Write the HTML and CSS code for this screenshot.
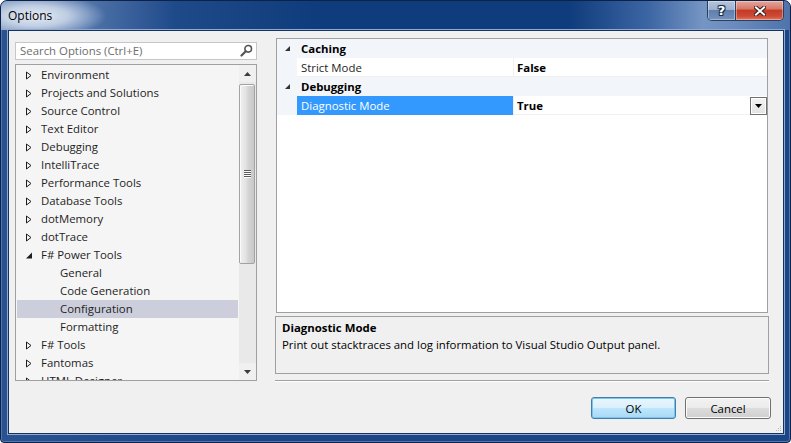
FILE: index.html
```html
<!DOCTYPE html>
<html>
<head>
<meta charset="utf-8">
<title>Options</title>
<link rel="stylesheet" href="styles.css">
</head>
<body>
<div class="window">
  <div class="titlebar">
    <span class="title">Options</span>
    <div class="caption">
      <div class="cap-btn help">?</div>
      <div class="cap-btn close">
        <svg width="12" height="10" viewBox="0 0 12 10"><path d="M2 1.5 L10 8.5 M10 1.5 L2 8.5" stroke="#3a2320" stroke-width="4" stroke-linecap="square"/><path d="M2 1.5 L10 8.5 M10 1.5 L2 8.5" stroke="#fff" stroke-width="2" stroke-linecap="square"/></svg>
      </div>
    </div>
  </div>
  <div class="client">
    <div class="main">
      <div class="left">
        <div class="search">
          <span class="placeholder">Search Options (Ctrl+E)</span>
          <svg class="mag" width="13" height="13" viewBox="0 0 13 13"><circle cx="8.2" cy="4.8" r="3.3" fill="none" stroke="#555" stroke-width="1.6"/><path d="M5.8 7.2 L1.5 11.5" stroke="#555" stroke-width="2.2" stroke-linecap="round"/></svg>
        </div>
        <div class="tree">
          <div class="tree-list">
            <div class="row"><span class="exp"><svg width="6" height="9" viewBox="0 0 6 9"><path d="M0.5 1 L5 4.5 L0.5 8 Z" fill="none" stroke="#1e1e1e"/></svg></span>Environment</div>
            <div class="row"><span class="exp"><svg width="6" height="9" viewBox="0 0 6 9"><path d="M0.5 1 L5 4.5 L0.5 8 Z" fill="none" stroke="#1e1e1e"/></svg></span>Projects and Solutions</div>
            <div class="row"><span class="exp"><svg width="6" height="9" viewBox="0 0 6 9"><path d="M0.5 1 L5 4.5 L0.5 8 Z" fill="none" stroke="#1e1e1e"/></svg></span>Source Control</div>
            <div class="row"><span class="exp"><svg width="6" height="9" viewBox="0 0 6 9"><path d="M0.5 1 L5 4.5 L0.5 8 Z" fill="none" stroke="#1e1e1e"/></svg></span>Text Editor</div>
            <div class="row"><span class="exp"><svg width="6" height="9" viewBox="0 0 6 9"><path d="M0.5 1 L5 4.5 L0.5 8 Z" fill="none" stroke="#1e1e1e"/></svg></span>Debugging</div>
            <div class="row"><span class="exp"><svg width="6" height="9" viewBox="0 0 6 9"><path d="M0.5 1 L5 4.5 L0.5 8 Z" fill="none" stroke="#1e1e1e"/></svg></span>IntelliTrace</div>
            <div class="row"><span class="exp"><svg width="6" height="9" viewBox="0 0 6 9"><path d="M0.5 1 L5 4.5 L0.5 8 Z" fill="none" stroke="#1e1e1e"/></svg></span>Performance Tools</div>
            <div class="row"><span class="exp"><svg width="6" height="9" viewBox="0 0 6 9"><path d="M0.5 1 L5 4.5 L0.5 8 Z" fill="none" stroke="#1e1e1e"/></svg></span>Database Tools</div>
            <div class="row"><span class="exp"><svg width="6" height="9" viewBox="0 0 6 9"><path d="M0.5 1 L5 4.5 L0.5 8 Z" fill="none" stroke="#1e1e1e"/></svg></span>dotMemory</div>
            <div class="row"><span class="exp"><svg width="6" height="9" viewBox="0 0 6 9"><path d="M0.5 1 L5 4.5 L0.5 8 Z" fill="none" stroke="#1e1e1e"/></svg></span>dotTrace</div>
            <div class="row"><span class="exp"><svg width="6" height="9" viewBox="0 0 6 9"><path d="M6 1.5 L6 7.5 L0 7.5 Z" fill="#1e1e1e"/></svg></span>F# Power Tools</div>
            <div class="row child">General</div>
            <div class="row child">Code Generation</div>
            <div class="row child selected">Configuration</div>
            <div class="row child">Formatting</div>
            <div class="row"><span class="exp"><svg width="6" height="9" viewBox="0 0 6 9"><path d="M0.5 1 L5 4.5 L0.5 8 Z" fill="none" stroke="#1e1e1e"/></svg></span>F# Tools</div>
            <div class="row"><span class="exp"><svg width="6" height="9" viewBox="0 0 6 9"><path d="M0.5 1 L5 4.5 L0.5 8 Z" fill="none" stroke="#1e1e1e"/></svg></span>Fantomas</div>
            <div class="row"><span class="exp"><svg width="6" height="9" viewBox="0 0 6 9"><path d="M0.5 1 L5 4.5 L0.5 8 Z" fill="none" stroke="#1e1e1e"/></svg></span>HTML Designer</div>
          </div>
          <div class="vscroll">
            <div class="sb-btn"><svg width="7" height="4" viewBox="0 0 7 4"><path d="M0 4 L3.5 0 L7 4 Z" fill="#3c3c3c"/></svg></div>
            <div class="sb-track">
              <div class="sb-thumb">
                <div class="sb-grip"><i></i><i></i><i></i><i></i></div>
              </div>
            </div>
            <div class="sb-btn"><svg width="7" height="4" viewBox="0 0 7 4"><path d="M0 0 L7 0 L3.5 4 Z" fill="#3c3c3c"/></svg></div>
          </div>
        </div>
      </div>
      <div class="right">
        <div class="pgrid">
          <div class="prow cat">
            <span class="pmargin"><svg width="5" height="5" viewBox="0 0 5 5"><path d="M5 0 L5 5 L0 5 Z" fill="#333"/></svg></span>
            <span class="cat-name">Caching</span>
          </div>
          <div class="prow">
            <span class="pmargin"></span>
            <span class="pname">Strict Mode</span>
            <span class="pval">False</span>
          </div>
          <div class="prow cat">
            <span class="pmargin"><svg width="5" height="5" viewBox="0 0 5 5"><path d="M5 0 L5 5 L0 5 Z" fill="#333"/></svg></span>
            <span class="cat-name">Debugging</span>
          </div>
          <div class="prow">
            <span class="pmargin"></span>
            <span class="pname selected">Diagnostic Mode</span>
            <span class="pval">True<span class="dropbtn"><svg width="7" height="4" viewBox="0 0 7 4"><path d="M0 0 L7 0 L3.5 4 Z" fill="#000"/></svg></span></span>
          </div>
        </div>
        <div class="desc">
          <div class="desc-title">Diagnostic Mode</div>
          <div class="desc-text">Print out stacktraces and log information to Visual Studio Output panel.</div>
        </div>
        <div class="sep"></div>
      </div>
    </div>
    <div class="footer">
      <button class="btn default">OK</button>
      <button class="btn">Cancel</button>
    </div>
    <svg class="grip" width="7" height="7" viewBox="0 0 7 7"><g fill="#b8b8b8"><rect x="5" y="1" width="1" height="1"/><rect x="3" y="3" width="1" height="1"/><rect x="5" y="3" width="1" height="1"/><rect x="1" y="5" width="1" height="1"/><rect x="3" y="5" width="1" height="1"/><rect x="5" y="5" width="1" height="1"/></g></svg>
  </div>
</div>
</body>
</html>
```
FILE: styles.css
```css
* { box-sizing: border-box; }
html, body { margin: 0; padding: 0; }
body {
  width: 791px;
  height: 443px;
  overflow: hidden;
  background: #ffffff;
  font-family: "Open Sans", "Noto Sans", sans-serif;
  font-size: 11.4px;
  color: #1e1e1e;
}
.window {
  width: 791px;
  height: 443px;
  display: flex;
  flex-direction: column;
  padding: 0 6px 8px 7px;
  border: 1px solid #0e2147;
  border-radius: 7px 7px 4px 4px;
  background:
    linear-gradient(90deg, #2a5190 0, #1d4586 30%, #1c4586 100%);
  box-shadow: inset 0 0 0 1px #4d78b5;
}
.titlebar {
  height: 29px;
  margin: 0 -6px 0 -7px;
  padding-left: 7px;
  display: flex;
  align-items: flex-start;
  border-radius: 6px 6px 0 0;
  background:
    radial-gradient(ellipse 70px 22px at 35px 15px, rgba(235,240,248,0.95) 0, rgba(225,233,244,0.75) 45%, rgba(200,215,235,0) 100%),
    linear-gradient(90deg, #6f8dba 0, #5578ad 10%, #1f4a8a 22%, #0f3c7c 40%, #0f3c7c 72%, #3c65a3 82%, #7595c4 89%, #6a8bbd 93%, #4e74ab 100%);
}
.title {
  margin-top: 6px;
  font-size: 12px;
  color: #000;
}
.caption {
  margin-left: auto;
  margin-right: 6px;
  display: flex;
  height: 20px;
  border: 1px solid #2b3e5e;
  border-top: none;
  border-radius: 0 0 5px 5px;
  overflow: hidden;
}
.cap-btn {
  height: 19px;
  display: flex;
  align-items: center;
  justify-content: center;
  box-shadow: inset 0 0 0 1px rgba(255,255,255,0.35);
}
.help {
  width: 28px;
  border-right: 1px solid #2b3e5e;
  background: linear-gradient(#b6c5dc 0, #9cb1cf 45%, #5f7fae 50%, #7691bb 100%);
  color: #fff;
  font-family: "DejaVu Sans", sans-serif;
  font-weight: bold;
  font-size: 13px;
  text-shadow: 0 0 2px #1d2d48, 1px 1px 0 #1d2d48, -1px -1px 0 #1d2d48, 1px -1px 0 #1d2d48, -1px 1px 0 #1d2d48;
}
.close {
  width: 47px;
  background: linear-gradient(#e6a79c 0, #d7796b 40%, #c43b27 50%, #cc4a33 80%, #e07a62 100%);
}
.client {
  position: relative;
  flex: 1;
  background: #f0f0f0;
  border: 1px solid #16335f;
  box-shadow: 0 0 0 1px #8fa9d0;
  padding: 7px 0 0 6px;
  display: flex;
  flex-direction: column;
}
.main {
  display: flex;
  gap: 19px;
}
.left {
  width: 242px;
  display: flex;
  flex-direction: column;
}
.search {
  margin-top: 4px;
  height: 18px;
  background: #fff;
  border: 1px solid #c3c7cd;
  display: flex;
  align-items: center;
  padding-left: 4px;
  padding-right: 3px;
  padding-bottom: 1px;
}
.placeholder {
  color: #6d6d6d;
  flex: 1;
}
.mag { display: block; }
.tree {
  margin-top: 4px;
  height: 317px;
  border: 1px solid #a0a0a0;
  background: #f5f5f5;
  display: flex;
  overflow: hidden;
}
.tree-list {
  flex: 1;
  padding-top: 1px;
  overflow: hidden;
}
.row {
  height: 18px;
  display: flex;
  align-items: center;
  padding-left: 9px;
  padding-bottom: 1px;
  margin-left: 1px;
  margin-right: 1px;
  white-space: nowrap;
}
.exp {
  width: 15px;
  display: flex;
  align-items: center;
  padding-top: 1px;
}
.exp svg { display: block; }
.row.child { padding-left: 43px; }
.row.selected { background: #cccedb; }
.vscroll {
  width: 17px;
  display: flex;
  flex-direction: column;
  background: #e9e9e9;
}
.sb-btn {
  height: 17px;
  display: flex;
  align-items: center;
  justify-content: center;
  background: #f0f0f0;
}
.sb-track {
  flex: 1;
  padding-top: 2px;
  padding-right: 1px;
}
.sb-thumb {
  height: 180px;
  border: 1px solid #a2a2a2;
  border-radius: 2px;
  background: linear-gradient(90deg, #f0f0f0 0, #e3e3e3 40%, #d4d4d4 60%, #c9c9c9 100%);
  box-shadow: inset 1px 1px 0 #fafafa;
  display: flex;
  align-items: flex-start;
  justify-content: center;
  padding-top: 85px;
}
.sb-grip {
  width: 7px;
  display: flex;
  flex-direction: column;
  gap: 1px;
}
.sb-grip i {
  display: block;
  background: #5a5a5a;
  border-bottom: 1px solid #fdfdfd;
  height: 2px;
  margin-bottom: -1px;
}
.right {
  width: 492px;
  display: flex;
  flex-direction: column;
}
.pgrid {
  height: 275px;
  border: 1px solid #a0a0a0;
  background: #fff;
}
.prow {
  height: 19px;
  display: flex;
  align-items: stretch;
}
.prow.cat { background: #f2f5fa; }
.pmargin {
  width: 20px;
  background: #f2f5fa;
  display: flex;
  align-items: center;
  padding-left: 8px;
}
.pmargin svg { display: block; }
.cat-name {
  font-weight: bold;
  color: #000;
  padding-left: 4px;
  display: flex;
  align-items: center;
}
.pname {
  width: 216px;
  padding-left: 4px;
  display: flex;
  align-items: center;
  border-bottom: 1px solid #f0f0f0;
}
.pname.selected {
  background: #3399ff;
  color: #fff;
  border-bottom-color: #3399ff;
}
.pval {
  flex: 1;
  border-left: 1px solid #f0f0f0;
  border-bottom: 1px solid #f0f0f0;
  padding-left: 3px;
  font-weight: bold;
  color: #000;
  display: flex;
  align-items: center;
}
.dropbtn {
  margin-left: auto;
  width: 17px;
  height: 18px;
  margin-top: 1px;
  align-self: flex-start;
  border: 1px solid #707070;
  background: linear-gradient(#f4f4f4, #e2e2e2);
  box-shadow: inset 0 0 0 1px #fff;
  display: flex;
  align-items: center;
  justify-content: center;
}
.dropbtn svg { display: block; }
.desc {
  margin: 3px -1px 0 -1px;
  height: 58px;
  border: 1px solid #a0a0a0;
  background: #f0f0f0;
  padding: 2px 6px;
  color: #000;
}
.desc-title {
  font-weight: bold;
  line-height: 17px;
}
.desc-text {
  line-height: 17px;
}
.sep {
  margin: 6px -1px 0 -1px;
  height: 2px;
  border-top: 1px solid #a0a0a0;
  border-bottom: 1px solid #ffffff;
}
.footer {
  margin-top: 15px;
  display: flex;
  justify-content: flex-end;
  gap: 9px;
  padding-right: 12px;
}
.btn {
  width: 86px;
  height: 22px;
  border: 1px solid #707070;
  border-radius: 3px;
  font-family: "Open Sans", "Noto Sans", sans-serif;
  font-size: 11.4px;
  color: #000;
  padding: 0;
  background: linear-gradient(#f2f2f2 0, #ebebeb 50%, #dddddd 51%, #cfcfcf 100%);
  box-shadow: inset 0 0 0 1px #fcfcfc;
}
.btn.default {
  width: 85px;
  border-color: #3c7fb1;
  background: linear-gradient(#eaf6fd 0, #d9f0fc 50%, #bee6fd 51%, #a7d9f5 100%);
  box-shadow: inset 0 0 0 1px #7ec4e8;
}
.grip {
  position: absolute;
  right: 1px;
  bottom: 1px;
}
```
